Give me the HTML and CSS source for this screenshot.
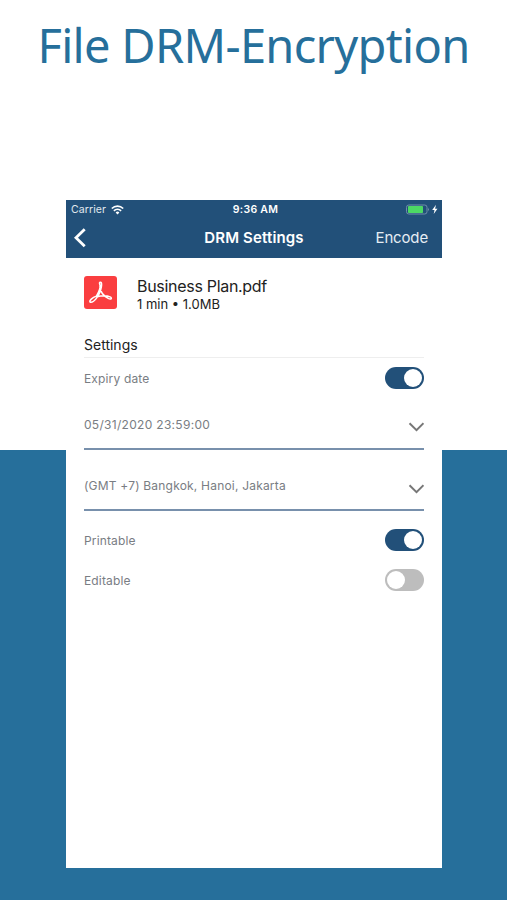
FILE: index.html
```
<!DOCTYPE html>
<html lang="en">
<head>
<meta charset="utf-8">
<title>File DRM-Encryption</title>
<link rel="stylesheet" href="styles.css">
</head>
<body>
<main class="poster">
  <h1 class="headline"><span>File DRM-Encryption</span></h1>
  <section class="phone">
    <header class="topbar">
      <div class="status">
        <div class="carrier"><span>Carrier</span>
          <svg width="13" height="10" viewBox="0 0 13 10" fill="none" stroke="#fff" stroke-width="1.7"><path d="M.8 3.5a8.2 8.2 0 0 1 11.4 0M2.9 5.8a5.2 5.2 0 0 1 7.2 0"/><path d="M6.5 9.5 4.6 7.5a2.8 2.8 0 0 1 3.8 0z" fill="#fff" stroke="none"/></svg>
        </div>
        <div class="time">9:36 AM</div>
        <div class="power">
          <svg width="33" height="12" viewBox="0 0 33 12"><rect x=".5" y="1" width="20.5" height="9" rx="2.3" fill="none" stroke="#6f8faa"/><rect x="2" y="2" width="15" height="7" rx=".8" fill="#4cd964"/><path d="M22.2 3.7q1.6 1.8 0 3.6z" fill="#8ba5bd"/><path d="M30 .8 26.2 6h2.3l-.8 4 3.8-5.3h-2.4z" fill="#fff"/></svg>
        </div>
      </div>
      <nav class="nav">
        <svg class="back" width="14" height="20" viewBox="0 0 14 20" fill="none" stroke="#fff" stroke-width="2.8"><path d="M11.7 1.2 3 9.7l8.7 8.5"/></svg>
        <div class="nav-title">DRM Settings</div>
        <div class="encode">Encode</div>
      </nav>
    </header>
    <div class="content">
      <div class="file">
        <svg class="pdf" width="33" height="33" viewBox="0 0 33 33"><rect width="33" height="33" rx="3" fill="#fa3e40"/><path d="M6.2 26.2c-1.4-1.5 2.2-4.7 6.2-6.1 3.3-5.6 4.6-9.7 3.2-12.4-.5-1.7 1.5-2.3 1.9-.3.5 2.9-.6 6-1.6 8.9-1.2 3.2-6 11.1-9.7 9.9zM15.8 10.4c.3 4.3 3.4 9.2 8.4 12 3 1.6 4.3-.4 1.9-1.5-3.5-1.5-9-1.2-13.8.1" fill="none" stroke="#fff" stroke-width="1.5" stroke-linejoin="round"/></svg>
        <div class="file-text">
          <div class="file-name">Business Plan.pdf</div>
          <div class="file-meta">1 min • 1.0MB</div>
        </div>
      </div>
      <h2 class="section-title"><span>Settings</span></h2>
      <div class="row"><span>Expiry date</span><i class="switch on"></i></div>
      <div class="select date"><span>05/31/2020 23:59:00</span>
        <svg width="16" height="10" viewBox="0 0 16 10" fill="none" stroke="#777" stroke-width="2"><path d="m1.5 1.2 7 6.9 7-6.9"/></svg></div>
      <div class="select zone"><span>(GMT +7) Bangkok, Hanoi, Jakarta</span>
        <svg width="16" height="10" viewBox="0 0 16 10" fill="none" stroke="#777" stroke-width="2"><path d="m1.5 1.2 7 6.9 7-6.9"/></svg></div>
      <div class="row print"><span>Printable</span><i class="switch on"></i></div>
      <div class="row"><span>Editable</span><i class="switch"></i></div>
    </div>
  </section>
</main>
</body>
</html>
```
FILE: styles.css
```
* { box-sizing: border-box; }
body { margin: 0; background: #fff; font-family: Inter, "Liberation Sans", sans-serif; }
.poster {
  width: 507px;
  height: 900px;
  overflow: hidden;
  background: linear-gradient(#fff 450px, #266f9b 450px);
}
.headline {
  margin: 0;
  height: 200px;
  padding-top: 12px;
  text-align: center;
  font: 400 47px/66px "Noto Sans", sans-serif;
  letter-spacing: -0.7px;
  color: #266f9b;
  white-space: nowrap;
}
.headline span { display: inline-block; }
.phone { width: 376px; height: 668px; margin: 0 auto 0 66px; background: #fff; }
.topbar { height: 58px; background: #225079; color: #fff; }
.status {
  height: 19px;
  padding: 0 3px 0 5px;
  display: grid;
  grid-template-columns: 1fr auto 1fr;
  align-items: center;
  font-size: 10.5px;
}
.status svg { display: block; }
.carrier { display: flex; align-items: center; gap: 5px; color: #e0e8ef; letter-spacing: .1px; }
.time { padding-left: 1px; font-weight: 600; letter-spacing: .3px; }
.power { display: flex; justify-content: flex-end; }
.nav {
  height: 37px;
  padding: 0 14px;
  display: grid;
  grid-template-columns: 1fr auto 1fr;
  align-items: center;
  font-size: 15px;
}
.back { margin-left: -7px; }
.nav-title { font-weight: 600; letter-spacing: .15px; }
.encode { text-align: right; color: #e6edf3; letter-spacing: -.15px; }
.content { padding: 18px 18px 0; }
.file { display: flex; height: 56px; gap: 20px; }
.file-name { font-size: 16px; line-height: 21px; letter-spacing: -.3px; color: #222; white-space: nowrap; }
.file-meta { font-size: 13px; line-height: 15px; color: #222; }
.section-title {
  margin: 0;
  height: 26px;
  border-bottom: 1px solid #eee;
  font-weight: 400;
  font-size: 14px;
  line-height: 25px;
  color: #222;
}
.row, .select {
  display: flex;
  justify-content: space-between;
  align-items: center;
  font-size: 12px;
  letter-spacing: .15px;
  color: #797d83;
}
.row { height: 40px; }
.select { height: 52px; border-bottom: 2px solid #7890ac; padding-top: 2px; }
.date { letter-spacing: .3px; }
.select svg { margin-top: 6px; }
.zone { height: 61px; padding-top: 12px; letter-spacing: .2px; }
.print { margin-top: 9px; }
.switch { width: 39px; height: 22px; padding: 2px; border-radius: 11px; background: #bdbdbd; }
.switch::before { content: ""; display: block; width: 18px; height: 18px; border-radius: 50%; background: #fff; }
.switch.on { background: #225079; }
.switch.on::before { margin-left: 17px; }
```
